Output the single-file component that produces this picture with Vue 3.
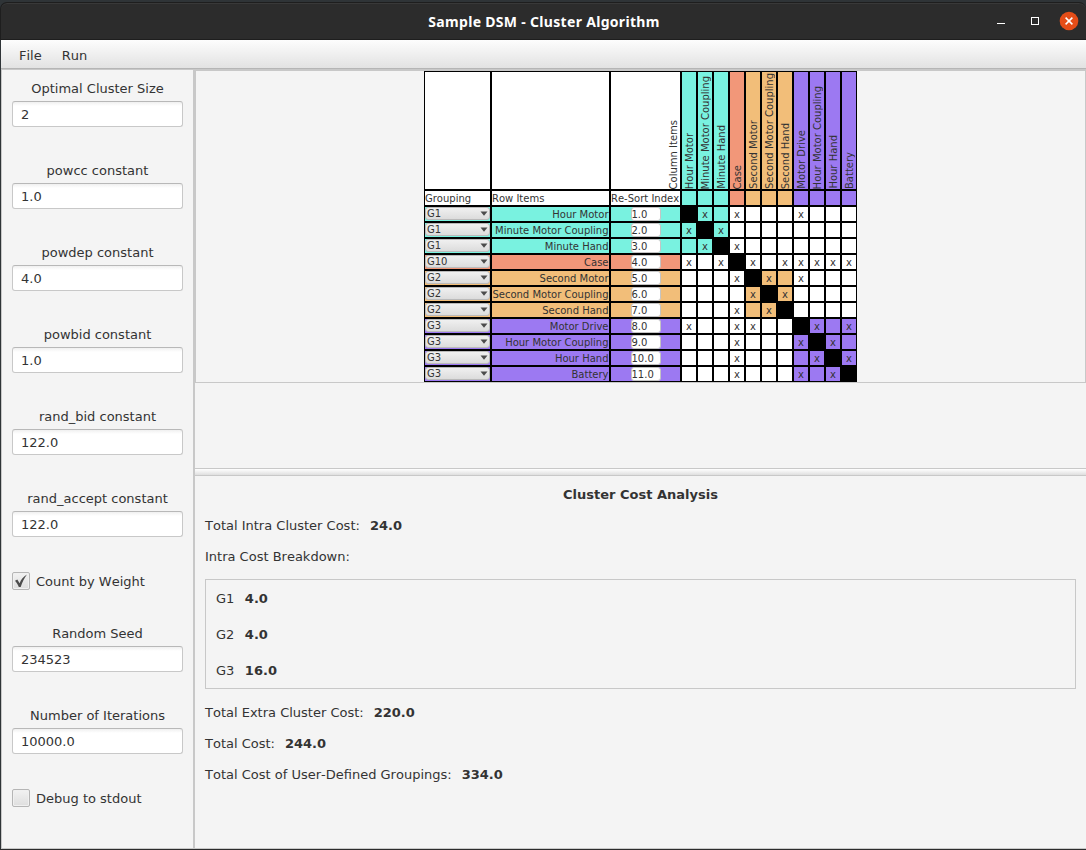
<script setup>
const upperFields = [
  { label: 'Optimal Cluster Size', value: '2' },
  { label: 'powcc constant', value: '1.0' },
  { label: 'powdep constant', value: '4.0' },
  { label: 'powbid constant', value: '1.0' },
  { label: 'rand_bid constant', value: '122.0' },
  { label: 'rand_accept constant', value: '122.0' },
]
const lowerFields = [
  { label: 'Random Seed', value: '234523' },
  { label: 'Number of Iterations', value: '10000.0' },
]
const items = [
  { name: 'Hour Motor', group: 'G1', index: '1.0', deps: [1, 3, 7] },
  { name: 'Minute Motor Coupling', group: 'G1', index: '2.0', deps: [0, 2] },
  { name: 'Minute Hand', group: 'G1', index: '3.0', deps: [1, 3] },
  { name: 'Case', group: 'G10', index: '4.0', deps: [0, 2, 4, 6, 7, 8, 9, 10] },
  { name: 'Second Motor', group: 'G2', index: '5.0', deps: [3, 5, 7] },
  { name: 'Second Motor Coupling', group: 'G2', index: '6.0', deps: [4, 6] },
  { name: 'Second Hand', group: 'G2', index: '7.0', deps: [3, 5] },
  { name: 'Motor Drive', group: 'G3', index: '8.0', deps: [0, 3, 4, 8, 10] },
  { name: 'Hour Motor Coupling', group: 'G3', index: '9.0', deps: [3, 7, 9] },
  { name: 'Hour Hand', group: 'G3', index: '10.0', deps: [3, 8, 10] },
  { name: 'Battery', group: 'G3', index: '11.0', deps: [3, 7, 9] },
]
const breakdown = [
  { name: 'G1', cost: '4.0' },
  { name: 'G2', cost: '4.0' },
  { name: 'G3', cost: '16.0' },
]
const totals = [
  { label: 'Total Extra Cluster Cost:', value: '220.0' },
  { label: 'Total Cost:', value: '244.0' },
  { label: 'Total Cost of User-Defined Groupings:', value: '334.0' },
]
const cellClass = (r, c) => {
  if (r === c) return 'self'
  return items[r].group === items[c].group ? items[r].group : ''
}
</script>

<template>
  <div class="window">
    <header class="titlebar">
      <div class="title">Sample DSM - Cluster Algorithm</div>
      <div class="controls">
        <svg width="92" height="20" viewBox="0 0 92 20">
          <rect x="6" y="12" width="8" height="1" fill="#fff" />
          <rect x="40.5" y="6.500" width="7" height="7" fill="none" stroke="#fff" />
          <circle cx="78" cy="10" r="9.3" fill="#e54d18" />
          <path d="M74.6 6.6l6.8 6.8M81.4 6.6l-6.8 6.8" stroke="#fff" stroke-width="1.5" />
        </svg>
      </div>
    </header>
    <nav class="menu"><span>File</span><span>Run</span></nav>
    <div class="body">
      <aside class="side">
        <div v-for="f in upperFields" :key="f.label" class="field">
          <label>{{ f.label }}</label>
          <div class="input">{{ f.value }}</div>
        </div>
        <div class="check">
          <span class="box">
            <svg width="18" height="18" viewBox="0 0 18 18">
              <path d="M3 8.800L5.300 7.600L7.600 11.200C9 7.600 11.400 4.600 15 2.600C12.300 6.300 10.300 10 8.700 15L6.800 15C5.900 12.600 4.700 10.600 3 8.800Z" fill="#4c4c4c" />
            </svg>
          </span>
          <span>Count by Weight</span>
        </div>
        <div v-for="f in lowerFields" :key="f.label" class="field">
          <label>{{ f.label }}</label>
          <div class="input">{{ f.value }}</div>
        </div>
        <div class="check"><span class="box"></span><span>Debug to stdout</span></div>
      </aside>
      <main class="main">
        <section class="scroll">
          <div class="matrix">
            <div class="cell"></div>
            <div class="cell"></div>
            <div class="cell corner"><span class="vert">Column Items</span></div>
            <div v-for="i in items" :key="i.name" class="cell head" :class="i.group">
              <span class="vert">{{ i.name }}</span>
            </div>
            <div class="cell caption">Grouping</div>
            <div class="cell caption">Row Items</div>
            <div class="cell caption">Re-Sort Index</div>
            <div v-for="i in items" :key="i.name" class="cell" :class="i.group"></div>
            <template v-for="(row, r) in items" :key="row.name">
              <div class="cell" :class="row.group">
                <div class="combo">
                  <span>{{ row.group }}</span>
                  <svg width="8" height="6" viewBox="0 0 8 6"><path d="M0.500 0.500H7.500L4 4.700Z" fill="#4c4c4c" /></svg>
                </div>
              </div>
              <div class="cell name" :class="row.group">{{ row.name }}</div>
              <div class="cell index" :class="row.group"><div class="mini">{{ row.index }}</div></div>
              <div v-for="(col, c) in items" :key="c" class="cell mark" :class="cellClass(r, c)">{{ row.deps.includes(c) ? 'x' : '' }}</div>
            </template>
          </div>
        </section>
        <div class="divider"></div>
        <section class="analysis">
          <h1>Cluster Cost Analysis</h1>
          <div class="line"><span>Total Intra Cluster Cost:</span><b>24.0</b></div>
          <div class="line">Intra Cost Breakdown:</div>
          <div class="breakdown">
            <div v-for="b in breakdown" :key="b.name" class="line"><span>{{ b.name }}</span><b>{{ b.cost }}</b></div>
          </div>
          <div class="totals">
            <div v-for="t in totals" :key="t.label" class="line"><span>{{ t.label }}</span><b>{{ t.value }}</b></div>
          </div>
        </section>
      </main>
    </div>
  </div>
</template>

<style>
body { margin: 0; background: #2c2c2c; }
</style>

<style scoped>
* { box-sizing: border-box; }
.window {
  width: 1086px; height: 850px; display: flex; flex-direction: column;
  font: 13px/17px "DejaVu Sans", sans-serif; color: #333; font-kerning: none;
  background: #2f3437; overflow: hidden; padding-top: 2px;
  border-bottom: 1px solid #2c2c2c;
}
.titlebar {
  height: 38px; flex: none; background: #2c2c2c; border-radius: 7px 7px 0 0;
  border-top: 1px solid #1e1e1e; border-bottom: 1px solid #1e1e1e; border-left: 1px solid #1e1e1e;
  box-shadow: inset 0 1px 0 #393939;
  display: grid; grid-template-columns: 1fr; align-items: center;
}
.title {
  grid-area: 1 / 1; text-align: center; color: #fff; white-space: nowrap;
  font: bold 14px/20px "Noto Sans", sans-serif; letter-spacing: 0.31px; padding: 1px 0 0 1px;
}
.controls { grid-area: 1 / 1; justify-self: end; width: 95px; height: 20px; }
.controls svg { display: block; }
.menu {
  height: 29px; flex: none; margin-left: 1px; padding: 3px 18px 0; display: flex; align-items: center; gap: 20px;
  background: linear-gradient(#fdfdfd, #e2e2e2); border-bottom: 1px solid #b5b5b5;
}
.body {
  flex: 1; min-height: 0; margin-left: 1px; display: flex; background: #f4f4f4;
  border: 1px solid #c8c8c8; border-right: 0;
}
.side {
  width: 191px; flex: none; padding: 10px 10px 0; display: flex; flex-direction: column; gap: 35px;
}
.field { display: flex; flex-direction: column; gap: 4px; }
.field label { text-align: center; height: 17px; }
.input {
  height: 26px; background: linear-gradient(#f0f0f0, #fff 4px); border: 1px solid #c8c8c8; border-top-color: #b8b8b8;
  border-radius: 3px; padding: 4px 8px;
}
.check { height: 18px; display: flex; align-items: center; gap: 6px; }
.box {
  width: 18px; height: 18px; flex: none; border: 1px solid #b5b5b5; border-radius: 2px;
  background: linear-gradient(#f2f2f2, #dedede); box-shadow: inset 0 0 0 1px #f0f0f0;
}
.box svg { display: block; margin: -1px; }
.main { flex: 1; min-width: 0; border-left: 2px solid #c8c8c8; display: flex; flex-direction: column; }
.scroll {
  height: 313px; flex: none; border: 1px solid #c8c8c8; display: flex; justify-content: center;
}
.matrix {
  display: grid; grid-template-columns: 67px 119px 71px repeat(11, 16px);
  grid-template-rows: 119px 16px repeat(11, 16px); width: 433px; height: 311px;
  font-size: 10px; line-height: 14px; background: #000;
}
.cell { border: 1px solid #000; background: #fff; white-space: nowrap; overflow: hidden; min-width: 0; min-height: 0; }
.cell.G1 { background: #79f2e0; }
.cell.G10 { background: #f29779; }
.cell.G2 { background: #f2be79; }
.cell.G3 { background: #9c79f2; }
.cell.self { background: #000; }
.caption { line-height: 15px; }
.corner, .head { display: flex; align-items: flex-end; justify-content: center; }
.corner { justify-content: flex-end; }
.head { padding-left: 2px; }
.vert { writing-mode: vertical-rl; transform: rotate(180deg); line-height: 14px; }
.corner .vert { line-height: 12px; }
.combo {
  height: 13px; display: flex; justify-content: space-between; align-items: center; padding: 0 1px 0 1px;
  line-height: 11px; border: 1px solid #bababa; border-radius: 3px; background: linear-gradient(#f0f0f0, #dcdcdc);
}
.name { text-align: right; line-height: 16px; padding-right: 0.5px; }
.index { display: flex; justify-content: center; }
.mini {
  width: 30px; height: 14px; background: #fff; border: 1px solid #c4c4c4; border-radius: 3px; line-height: 13px;
}
.mark { text-align: center; line-height: 16px; }
.divider {
  height: 8px; flex: none; margin-top: 85px; border: 1px solid #c8c8c8; border-width: 1px 0;
  background: linear-gradient(#fff, #dfdfdf);
}
.analysis { padding: 10px 10px 0; display: flex; flex-direction: column; gap: 14px; }
h1 { margin: 0; font-size: 13px; line-height: 17px; text-align: center; }
.line { display: flex; gap: 10px; height: 17px; white-space: nowrap; }
.breakdown { height: 110px; border: 1px solid #c8c8c8; padding: 10px; display: flex; flex-direction: column; gap: 19px; }
.breakdown .line { gap: 10.5px; }
.totals { padding-top: 1px; display: flex; flex-direction: column; gap: 14px; }
</style>
